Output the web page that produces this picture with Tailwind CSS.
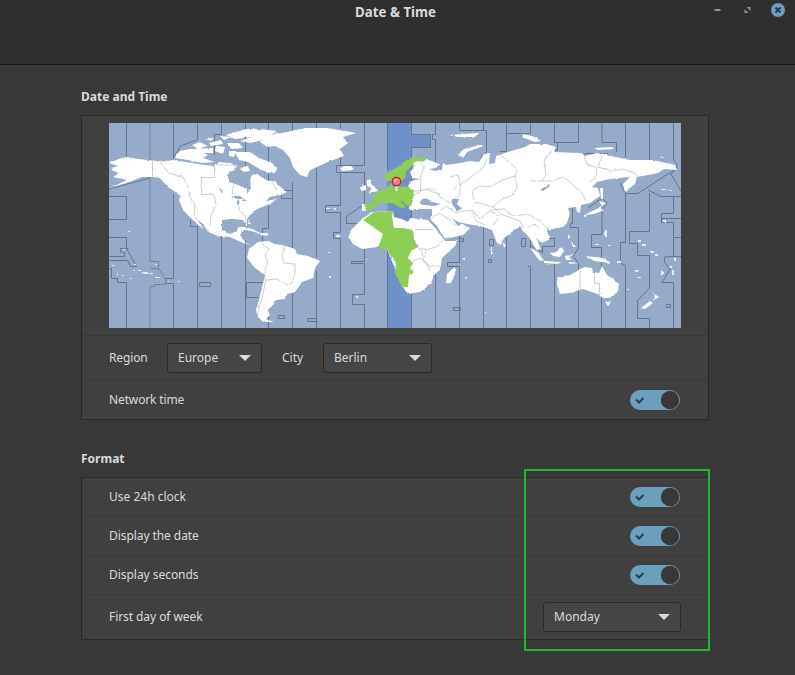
<!DOCTYPE html>
<html lang="en">
<head>
<meta charset="utf-8">
<title>Date &amp; Time</title>
<script src="https://cdn.jsdelivr.net/npm/@tailwindcss/browser@4"></script>
</head>
<body class="relative w-[795px] h-[675px] overflow-hidden bg-[#383838] text-[#dadada] text-[12px] leading-[18px] font-['Noto_Sans',sans-serif]">
<header class="relative h-[65px] border-b border-[#151515] bg-[#2f2f2f]">
  <h1 class="pt-[3px] pr-[4px] text-center text-[13.33px] leading-[18px] font-bold">Date &amp; Time</h1>
  <div class="absolute top-[3px] right-[10px] flex items-center">
    <svg class="mr-[23px]" width="7" height="14" viewBox="0 0 7 14"><path d="M.5 6h6v2h-6z" fill="#929292"/></svg>
    <svg class="mr-[20px]" width="7" height="14" viewBox="0 0 7 14"><path d="M2.500 4H6.500V8Z M.5 6V10H4.500Z" fill="#929292"/></svg>
    <svg width="14" height="14" viewBox="0 0 14 14"><circle cx="7" cy="7" r="7" fill="#6a9fbd"/><path d="M4.500 4.500l5 5m0-5l-5 5" stroke="#2f3539" stroke-width="1.800"/></svg>
  </div>
</header>
<main class="ml-[81px] w-[628px] pt-[23px]">
  <h2 class="h-[27px] font-bold">Date and Time</h2>
  <section class="h-[305px] border border-[#292929] bg-[#404040]">
    <div class="flex h-[219px] justify-center pt-[7px]">
      <svg width="572" height="205" viewBox="109 123 572 205">
        <defs>
          <filter id="coast" x="0" y="0" width="100%" height="100%" color-interpolation-filters="sRGB">
            <feTurbulence type="fractalNoise" baseFrequency=".25" numOctaves="2" seed="4" result="n"/>
            <feDisplacementMap in="SourceGraphic" in2="n" scale="2.300" xChannelSelector="R" yChannelSelector="G"/>
          </filter>
        </defs>
        <rect x="109" y="123" width="572" height="205" fill="#96aac9"/>
        <path d="M387.500 123H411.500V134H430.500V148H411.500V328H387.500z" fill="#6f90c9"/>
        <!-- time zone limits -->
        <g fill="none" stroke="#66758f" stroke-width="1">
          <path d="M126.500 123V160M109 196.500H126.500V219.500H109M109 237.500H126.500V248.500L136.500 266.500H130.500L128 260.500H109M109.500 256.500H124.500V252.500L120.500 252V248.500H128.500M109.500 268.500H111.500V278.500H117.500V282.500H126.500V328"/>
          <path d="M150 123V160M150 178V261.500H158.500V268.500H150M158.500 268.500L165.500 279V284.500H154.500V286.500H150V328" opacity=".75"/>
          <path d="M173.500 123V158M197.500 123V139.500L180.500 146L173.500 158M173.500 194V278.500H165.500M165.500 283.500H173.500V328M109 189L150 178"/>
          <path d="M221.500 123V134.500H214.500V155M221.500 236V328M190.500 220V226.500H197.500V328M245.500 123V165M245.500 240V328M199.500 282.500H210.500V286.500H199.500zM246.500 282.500H264.500M246.500 282.500V297.500H259"/>
          <path d="M268.500 123V180M268.500 200V228.500H262.500V242M268.500 310V328M292.500 123V160M292.500 182V248M292.500 190.500H281.500V198.500H292.500M292.500 294V328M278.500 315.500H284.500V318.500H278.500z"/>
          <path d="M316.500 123V258M316.500 270V328M316.500 318.500H307.500V321.500H318M340.500 123V165.500H336.500V172.500H364.500M340.500 165.500H364.500M340.500 172.500V205.500H325.500V212.500H340.500V232.500H333.500V238.500H340.500V328"/>
          <path d="M364.500 123V165M364.500 172V204L346.500 216.500V223.500H357M364.500 249V261.500H351.500V263.500H364.500V294.500H352.500V304.500H364.500V328M387.500 123V170M387.500 250V328M411.500 123V134.500H430.500V147.500H411.500V328"/>
          <path d="M435.500 123V134.500H432.500V139.500H435.500V163M435.500 274V328M459.500 123V130.500H486.500V152L479.500 159M459.500 224V262.500H447.500V266.500H459.500V328M453.500 307.500H460.500V310.500H453.500zM459.500 238.500H463.500V241.500H459.500"/>
          <path d="M483.500 123V130M483.500 226V328M489.500 239.500H493.500V245.500H489.500zM488.500 259.500H491.500V262.500H488.500zM506.500 123V151.500H500M506.500 133.500H530.500V123M506.500 237V328M521.500 238.500H525.500V246.500H521.500zM528 266.500H530.500V328M530.500 240V248"/>
          <path d="M554.500 123V142.500H557.500V150L544 153M554.500 142.500H578.500V123M602 123V142.500H616.500V152M585 155V153.500H608M554.500 238.500H548V230M554.500 238.500V246.500H542.500V252.500L530 245M554.500 328V261M572.500 208V223.500H570.500V227.500H578.500V248L573.500 256L578.500 264V328"/>
          <path d="M602 202V234.500H591.500V247.500H601.500V328M625.500 123V158M625.500 193V242.500H620.500V263L625.500 266V328M625.500 193.500H638L677 168V164L673.500 160V123M620 183L625 193M649.500 123V160M677 168L671 174L681 191M648 190L661 196.500H681M649.500 193V231.500H629.500V243.500H637.500V255.500H649.500V288L637.500 300.500V318.500H649.500V328"/>
          <path d="M673.500 196V213.500H661.500V222.500H673.500V256.500L664.500 257V262L670 269L662 282.500H673.500V328M681 218.500H661.500M673.500 256.500H681M673.500 237.500H681M666.500 304.500H670.500V307.500H666.500zM588 208L602 198L607 203L604 207L594 213"/>
        </g>
        <!-- land masses -->
        <g filter="url(#coast)">
          <g fill="#fff">
            <path d="M109 163L120 158.500L127 157L138 159L152 160.500L165 161.500L173 160L182 161.500L202 164.500L213 166L218 162L230 163L238 166L227 175L230 182L238 185L247 189L247 194L251 188L250 176L257 174L263 178L268 181L275 181L278 185L287 192L281 195L270 197L266 201L277 199L270 204L257 209L250 215L247 219L247 226L243 220L232 219L222 220L222 230L230 234L237 231L239 227L246 227L240 235L246 243L253 245L243 243L230 237L218 236L208 232L202 223L198 220L204 230L193 220L183 210L179 200L180 195L168 187L160 178L152 177L142 177L132 181L110 188L127 180L113 177L118 174L111 168L118 166z"/>
            <path d="M260 142L270 135L287 132L305 128L327 128L356 133L343 137L348 143L340 149L344 156L330 161L317 167L310 170L307 177L300 175L293 167L290 158L283 150L275 146L267 147z"/>
            <path d="M226 135L246 129L260 129L277 131L263 140L250 143L240 141L252 137L235 139z"/>
            <path d="M192 145L200 142L208 146L198 149zM174 158L180 151L190 149L201 152L208 155L203 158L215 162L202 163L188 160zM190 149L213 148L213 153L196 153zM209 143L221 140L223 144L211 146zM216 146L225 147L223 154L215 151zM227 143L239 143L243 148L232 149zM229 151L236 151L234 157L229 156zM235 152L250 152L259 158L272 163L277 168L275 173L266 172L258 168L248 162L239 160zM240 168L248 166L250 171L243 172zM220 136L231 137L224 140zM205 139L214 138L211 141z"/>
            <path d="M340 168L344 166L351 166L354 169L348 171L342 171zM361 187L366 185L366 190L361 191zM367 180L371 180L371 184L375 187L378 191L369 193L371 188L367 186zM362 204L366 204L366 211L362 211zM240 229L249 228L263 234L255 232L246 230zM261 233L269 233L267 236L260 235zM248 220L251 224L249 224z"/>
            <path d="M258 242L268 241L275 244L282 245L295 249L297 254L308 256L320 261L315 268L313 278L302 282L295 292L287 294L285 299L276 300L274 304L268 310L270 315L266 319L274 322L263 322L257 316L256 310L260 296L265 275L255 268L247 258L249 249z"/>
            <path d="M363 218L373 212L393 211L394 217L402 219L408 222L410 218L428 220L436 229L445 241L457 241L455 246L442 258L440 270L433 276L432 283L420 292L408 294L402 286L387 249L377 247L362 249L353 244L349 237L351 230zM455 267L455 274L451 283L446 283L447 274z"/>
            <path d="M413 163L419 159L426 159L440 164L436 168L429 169L435 171L442 169L443 163L446 165L460 163L470 161L479 162L484 154L490 153L489 164L495 163L496 156L508 152L525 147L530 144L546 144L556 147L554 152L580 153L585 156L597 153L630 160L653 160L675 165L677 170L664 169L658 173L637 177L635 184L625 192L623 184L630 177L610 179L597 182L592 187L598 188L600 196L590 203L581 205L580 213L577 212L576 207L568 208L570 213L567 223L563 227L547 230L550 239L542 243L536 238L541 249L536 250L531 240L528 236L523 231L520 226L512 232L504 238L501 245L497 243L492 230L480 226L467 224L459 222L470 228L463 235L445 239L436 225L430 219L432 210L421 211L410 210L409 203L413 196L408 186L411 181L420 179L412 178L410 172L414 167z"/>
            <path d="M458 155L464 149L480 145L484 146L467 152L463 158zM449 135L479 133L475 137L458 137zM523 134L535 137L541 141L535 142L522 137zM594 148L612 147L614 149L598 150zM660 157L665 157L662 158zM503 243L506 245L504 248zM600 188L603 188L603 199L601 199zM599 201L606 203L602 206zM601 206L602 211L594 214L585 215L592 211L597 209zM584 215L587 214L585 218z"/>
            <path d="M530 248L539 253L544 261L539 260zM544 261L561 262L558 264L544 263zM550 253L556 252L562 247L564 251L560 257L553 256zM565 256L574 254L569 257L572 260L566 260zM568 234L570 237L568 239zM571 241L576 247L573 247zM586 256L594 257L604 258L611 264L602 262L594 261zM568 262L579 263L570 264z"/>
            <path d="M557 278L570 275L580 269L585 267L592 268L593 272L599 273L602 266L607 275L613 279L619 284L618 291L611 298L603 298L595 293L583 289L570 293L560 294L557 285zM605 302L611 302L608 306zM641 308L650 301L653 303L645 309zM652 301L659 297L653 293L655 298z"/>
          </g>
          <g fill="#8ccf54">
            <path d="M384.500 174L397 167.500L405 161L414 157L426 158L424 161.500L415 161.500L410 168L405 172L406 176L402.500 181L399 186L396 180L386 181z"/>
            <path d="M370 195L375 195L380 191L388 187L391 183L393 187L403 186L408 187L414 190L413 200L411 206L408 206L403 202L399 200L406 207L402 208.500L393 203L387 203L381 202L374 208L366 211L364 204L375 202z"/>
            <path d="M363 220L375 212L393 211L392 218L394 228L404 228L413 231L414 240L418 247L411 251L408 258L413 263L410 268L414 273L409 275L408 287L402 287L395 273L396 263L390 255L387 249L378 248L383 234z"/>
          </g>
          <g fill="#96aac9">
            <path d="M420 204L422 199L428 199L432 202L441 204L434 206L425 205zM452 199L459 199L457 204L462 209L457 211L452 204zM452 218L458 222L463 224L458 226zM540 190L549 184L550 186L543 191zM231 196L240 196L244 199L237 199zM237 199L239 204L237 205zM244 199L247 201L242 201zM218 187L223 191L221 192zM414 209H432V216L424 218L414 214z"/>
          </g>
          <g fill="#e5ebf2">
            <path d="M138 270h4v1h-4zM142 272h6v2h-6zM149 273h4v1h-4zM154 277h5v1h-5zM133 270h2v1h-2zM112 265h2v1h-2zM122 275h2v1h-2zM130 278h2v1h-2zM117 274h1v1h-1zM155 264h2v1h-2zM128 231h2v1h-2zM168 281h3v1h-3zM178 281h2v1h-2zM123 249h2v1h-2zM134 264h2v1h-2zM605 230h2v7h-2zM638 240h4v2h-4zM642 244h4v2h-4zM651 251h3v2h-3zM655 254h3v2h-3zM661 271h2v4h-2zM669 266h3v2h-3zM672 270h2v5h-2zM637 277h4v1h-4zM627 289h2v1h-2zM635 270h3v2h-3zM617 261h4v2h-4zM608 245h3v1h-3zM595 244h4v1h-4zM491 247h1v7h-1zM463 258h2v2h-2zM464 277h3v1h-3zM485 313h2v1h-2zM336 235h4v2h-4zM328 252h2v1h-2zM329 276h2v2h-2zM327 208h3v1h-3zM333 208h3v1h-3zM366 259h1v1h-1zM356 297h2v1h-2zM674 258h2v3h-2zM661 189h8v1h-8zM670 190h6v1h-6zM663 220h3v2h-3z"/>
          </g>
          <!-- borders over land -->
          <g fill="none" stroke="#a3b2ae" stroke-width=".7" opacity=".85">
            <path d="M152.500 161V177L168 186M160 162L169 173L183 177L188 187L190 197L195 205L194 215L200 224L210 232M214.500 166V177.500H201.500V194.500H214L216 205L211 215L210 226M237 155L234 163L236 174L232 193L239 200L239 210L245 216L246 224M274 173L273 183L277 190M216 165H234"/>
            <path d="M262 243L269 249L265 255L268 262L265 270L265 280L277 279L287 285L292 283L295 272V264L284 263L282 255L285 246M266 280L262 298L257 314M392 218V228L413 230V240L419 248L422 252L424 262L430 266L440 266M415 229.500H434M413 261L420 258L426 262L430 271M426 250L436 247L443 241M419 249H426L425 258"/>
            <path d="M418 160L424 167L420 178L421 191L413 196M414 191L427 190L440 194M425 189L435 189L440 197L450 203L460 195L460 185L470 178L483 168L487 159M450 177L458 175L460 183L453 190M440 211L446 206L456 213L464 211L473 210L479 219L490 211L500 216L493 225M474 200L472 191L480 186L490 187L502 180L515 176L517 187L513 195L502 199L493 207L475 202M500 154L508 161L517 169L515 177"/>
            <path d="M552 150L544 161L546 175L542 181L552 181L563 177L570 182L575 187L582 193L586 201M584 156L587 164L597 168L596 177L590 182M602 156L598 167L612 171L622 169L635 173L637 177M530 181H542M490 210L504 209L513 216L528 214L541 222L548 229M472 212L476 221L485 225M528 227L535 224L540 229M430 220L439 213L447 218L457 226M493 207L501 214L520 221L523 229M414 213L423 216M580 271V289.500M594.500 273V283.500H599.500V296"/>
          </g>
        </g>
        <path d="M396.500 184V191" stroke="#e4e4e9" stroke-width="2"/>
        <circle cx="396.500" cy="181.500" r="4.200" fill="#f17b78" stroke="#b52228" stroke-width="1.200"/>
        <circle cx="395.500" cy="180.300" r="1.500" fill="#f8aaa6"/>
      </svg>
    </div>
    <div class="flex h-[45px] items-center border-t border-[#393939] pl-[27px]">
      <span class="w-[58px] tracking-[-0.12px]">Region</span>
      <button class="flex h-[30px] w-[95px] items-center justify-between rounded-[3px] border border-[#292929] bg-[#454545] px-[10px]">Europe<svg width="12" height="6" viewBox="0 0 12 6"><path d="M0 0H12L6 6z" fill="#dadada"/></svg></button>
      <span class="ml-[20px] w-[41px]">City</span>
      <button class="flex h-[30px] w-[109px] items-center justify-between rounded-[3px] border border-[#292929] bg-[#454545] px-[10px]">Berlin<svg width="12" height="6" viewBox="0 0 12 6"><path d="M0 0H12L6 6z" fill="#dadada"/></svg></button>
    </div>
    <div class="flex h-[39px] items-center justify-between border-t border-[#393939] pr-[28px] pl-[27px]">
      <span class="pb-px tracking-[-0.13px]">Network time</span>
      <svg width="50" height="20" viewBox="0 0 50 20"><rect width="50" height="20" rx="10" fill="#6a9fbd"/><circle cx="40" cy="10" r="9.200" fill="#383838"/><path d="M6 9.500l3 3 4.500-4.500" fill="none" stroke="#2f3d48" stroke-width="2"/></svg>
    </div>
  </section>
  <h2 class="mt-[30px] h-[27px] font-bold">Format</h2>
  <section class="h-[163px] border border-[#292929] bg-[#404040]">
    <div class="flex h-[38px] items-center justify-between pr-[28px] pl-[27px]">
      <span>Use 24h clock</span>
      <svg width="50" height="20" viewBox="0 0 50 20"><rect width="50" height="20" rx="10" fill="#6a9fbd"/><circle cx="40" cy="10" r="9.200" fill="#383838"/><path d="M6 9.500l3 3 4.500-4.500" fill="none" stroke="#2f3d48" stroke-width="2"/></svg>
    </div>
    <div class="flex h-[39px] items-center justify-between border-t border-[#393939] pr-[28px] pl-[27px]">
      <span class="tracking-[-0.07px]">Display the date</span>
      <svg width="50" height="20" viewBox="0 0 50 20"><rect width="50" height="20" rx="10" fill="#6a9fbd"/><circle cx="40" cy="10" r="9.200" fill="#383838"/><path d="M6 9.500l3 3 4.500-4.500" fill="none" stroke="#2f3d48" stroke-width="2"/></svg>
    </div>
    <div class="flex h-[39px] items-center justify-between border-t border-[#393939] pr-[28px] pl-[27px]">
      <span class="tracking-[-0.04px]">Display seconds</span>
      <svg width="50" height="20" viewBox="0 0 50 20"><rect width="50" height="20" rx="10" fill="#6a9fbd"/><circle cx="40" cy="10" r="9.200" fill="#383838"/><path d="M6 9.500l3 3 4.500-4.500" fill="none" stroke="#2f3d48" stroke-width="2"/></svg>
    </div>
    <div class="flex h-[45px] items-center justify-between border-t border-[#393939] pr-[27px] pl-[27px]">
      <span class="tracking-[-0.07px]">First day of week</span>
      <button class="flex h-[30px] w-[138px] items-center justify-between rounded-[3px] border border-[#292929] bg-[#454545] px-[10px]">Monday<svg width="12" height="6" viewBox="0 0 12 6"><path d="M0 0H12L6 6z" fill="#dadada"/></svg></button>
    </div>
  </section>
</main>
<div class="pointer-events-none absolute top-[469px] left-[524px] h-[182px] w-[186px] border-2 border-[#22b82e]"></div>
</body>
</html>
